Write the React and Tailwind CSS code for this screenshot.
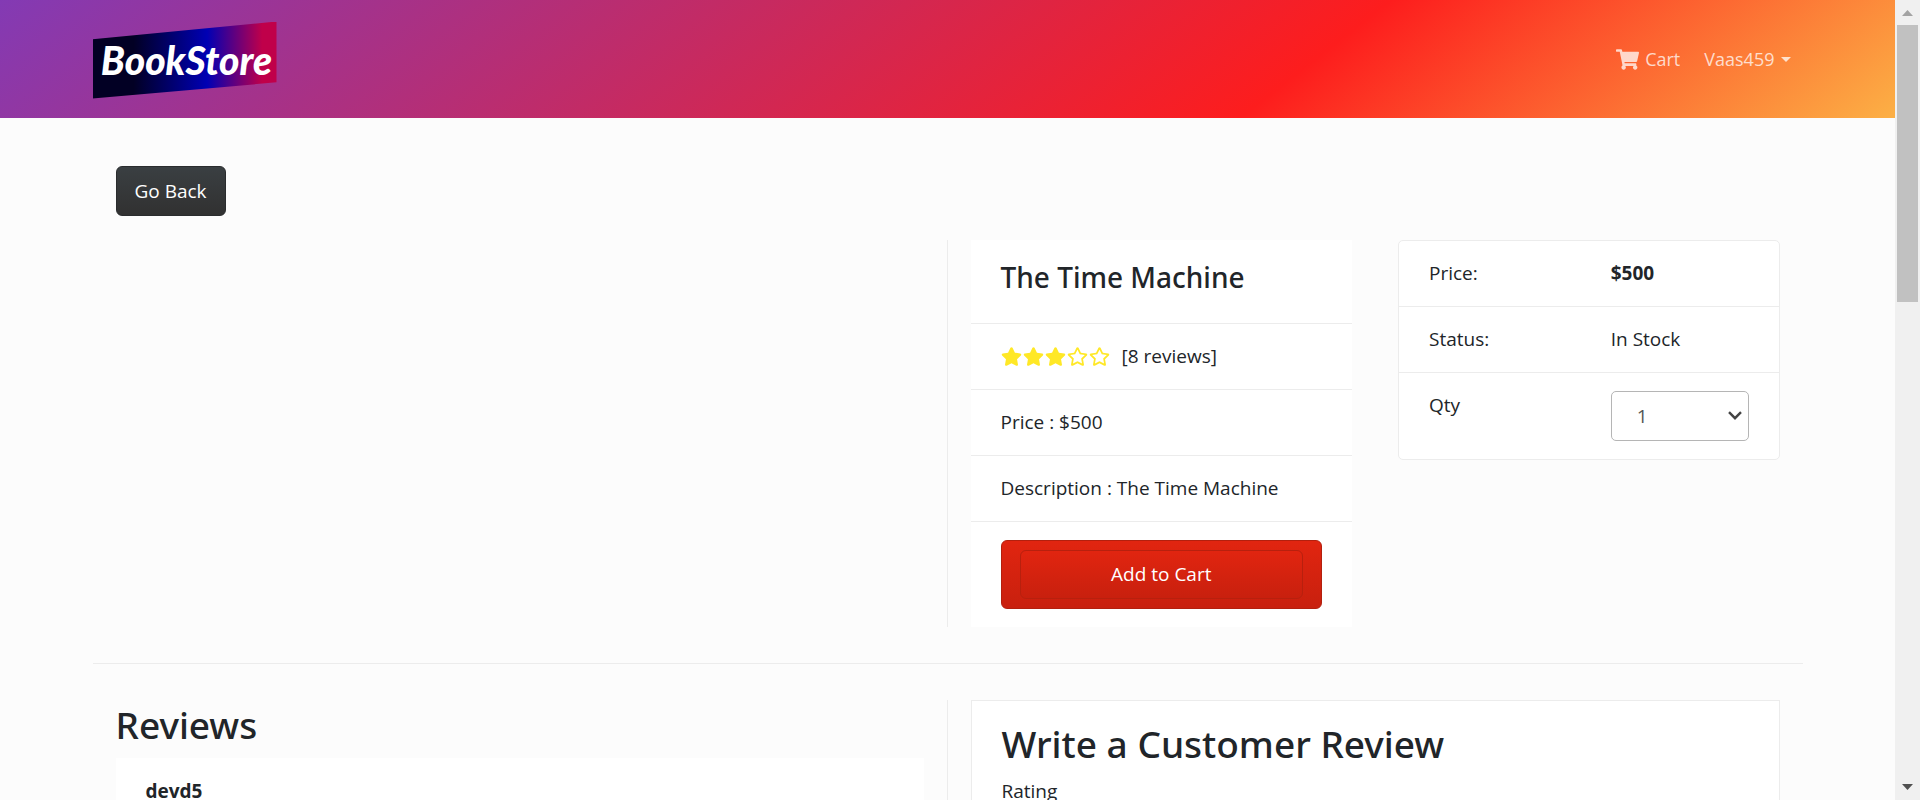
import { FaShoppingCart, FaStar, FaRegStar } from "react-icons/fa";

function Row({ label, children }) {
  return (
    <div className="grid grid-cols-2 gap-x-11 border-t border-[#ececec] px-[30px] py-[18px] first:border-t-0">
      <dt>{label}</dt>
      <dd>{children}</dd>
    </div>
  );
}

function Header() {
  return (
    <header className="h-[118px] bg-[linear-gradient(142deg,#833ab4_0%,#fd1d1d_68%,#fcb045_100%)]">
      <nav className="mx-auto flex h-full max-w-[1710px] items-center justify-between">
        <a
          href="#home"
          className="mt-0.5 flex h-[77px] w-46 items-center justify-center bg-[linear-gradient(90deg,#020024_22%,#0000b4_62%,#c0004a_92%)] pl-1 font-['Lato',sans-serif] text-[39px] leading-10 font-black text-white italic [clip-path:polygon(0_23%,100%_0,100%_79%,0_100%)]"
        >
          BookStore
        </a>
        <div className="flex items-center gap-6 pr-3 text-[18px] text-white/75">
          <a href="#cart" className="flex items-center gap-1.5">
            <FaShoppingCart className="size-[23px]" />
            Cart
          </a>
          <button type="button" className="flex items-center gap-1.5">
            Vaas459
            <svg viewBox="0 0 10 5" className="h-[5px] w-2.5" fill="currentColor">
              <path d="M0 0h10L5 5z" />
            </svg>
          </button>
        </div>
      </nav>
    </header>
  );
}

function Product() {
  return (
    <section className="grid grid-cols-4 border-b border-[#ececec] pt-6 pb-9">
      <div className="col-span-2 border-r border-[#ececec]" />
      <div className="px-[23px]">
        <div className="divide-y divide-[#ececec] bg-white">
          <h3 className="px-[30px] pt-[19px] pb-7 font-['Noto_Sans',sans-serif] text-[28px] leading-9 font-medium">
            The Time Machine
          </h3>
          <div className="flex items-center px-[30px] py-[18px]">
            <span className="flex gap-px text-[#ffe826]">
              <FaStar className="size-[21px]" />
              <FaStar className="size-[21px]" />
              <FaStar className="size-[21px]" />
              <FaRegStar className="size-[21px]" />
              <FaRegStar className="size-[21px]" />
            </span>
            <span className="pl-3">[8 reviews]</span>
          </div>
          <p className="px-[30px] py-[18px]">Price : $500</p>
          <p className="px-[30px] py-[18px]">Description : The Time Machine</p>
          <div className="px-[30px] py-[18px]">
            <button
              type="button"
              className="block w-full rounded-md border border-[#b3200e] bg-linear-to-b from-[#e12510] to-[#c8200e] px-[18px] py-[9px] text-white"
            >
              <span className="block rounded-md border border-[#b8200e] bg-linear-to-b from-[#e12510] to-[#c8200e] py-[9px]">
                Add to Cart
              </span>
            </button>
          </div>
        </div>
      </div>
      <div className="px-[23px]">
        <dl className="rounded-[5px] border border-[#ececec] bg-white">
          <Row label="Price:">
            <strong className="font-bold">$500</strong>
          </Row>
          <Row label="Status:">In Stock</Row>
          <Row label={<label htmlFor="qty">Qty</label>}>
            <span className="relative block">
              <select
                id="qty"
                className="block h-[50px] w-full appearance-none rounded-[5px] border border-[#b5b5b5] bg-white px-[25px] text-[#555]"
              >
                <option>1</option>
                <option>2</option>
                <option>3</option>
              </select>
              <svg
                viewBox="0 0 14 9"
                className="pointer-events-none absolute top-5 right-[7px] h-[9px] w-3.5"
                fill="none"
                stroke="#444"
                strokeWidth="2.4"
              >
                <path d="M1 1.2l6 6 6-6" />
              </svg>
            </span>
          </Row>
        </dl>
      </div>
    </section>
  );
}

function Reviews() {
  return (
    <section className="grid grid-cols-2 pt-9">
      <div className="border-r border-[#ececec] px-[23px]">
        <h2 className="pb-[9px] font-['Noto_Sans',sans-serif] text-[37px] leading-[49px] font-medium">Reviews</h2>
        <div className="bg-white px-[30px] py-[19px]">
          <strong className="font-bold">devd5</strong>
        </div>
      </div>
      <div className="px-[23px]">
        <form className="border border-[#ececec] bg-white px-[30px] py-[18px]">
          <h2 className="pb-[9px] font-['Noto_Sans',sans-serif] text-[37px] leading-[49px] font-medium">
            Write a Customer Review
          </h2>
          <label htmlFor="rating" className="block">
            Rating
          </label>
          <select id="rating" className="mt-2 h-[50px] w-full rounded-[5px] border border-[#b5b5b5] px-[25px]">
            <option>Select...</option>
          </select>
        </form>
      </div>
    </section>
  );
}

function ScrollBar() {
  return (
    <div aria-hidden="true" className="flex w-[25px] shrink-0 flex-col items-center bg-[#f0f0f0]">
      <svg viewBox="0 0 11 6" className="mt-2.5 mb-[9px] h-1.5 w-[11px] shrink-0" fill="#a3a3a3">
        <path d="M0 6L5.500 0 11 6z" />
      </svg>
      <div className="h-[277px] w-[21px] bg-[#c1c1c1]" />
      <svg viewBox="0 0 11 6" className="mt-auto mb-2.5 h-1.5 w-[11px] shrink-0" fill="#505050">
        <path d="M0 0h11L5.500 6z" />
      </svg>
    </div>
  );
}

export default function App() {
  return (
    <div className="flex h-screen bg-[#fcfcfc] font-['Open_Sans',sans-serif] text-[19px] leading-[29px] text-[#212529]">
      <div className="min-w-0 flex-1 overflow-hidden">
        <Header />
        <main className="mx-auto max-w-[1710px] pt-12">
          <div className="px-[23px]">
            <a
              href="#home"
              className="inline-block rounded-md border border-[#2a2c2e] bg-linear-to-b from-[#3a3f42] to-[#313131] px-[18px] py-[9px] align-top leading-[30px] text-white"
            >
              Go Back
            </a>
          </div>
          <Product />
          <Reviews />
        </main>
      </div>
      <ScrollBar />
    </div>
  );
}
